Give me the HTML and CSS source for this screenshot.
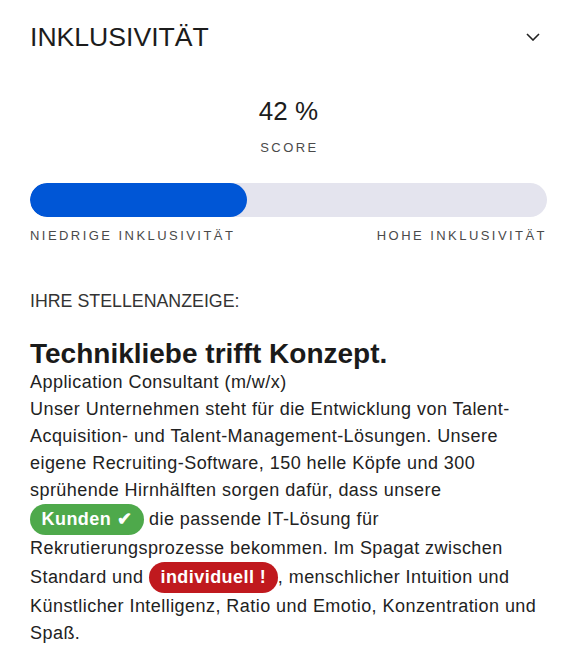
FILE: index.html
```html
<!DOCTYPE html>
<html lang="de">
<head>
<meta charset="utf-8">
<link rel="stylesheet" href="styles.css">
</head>
<body>
<section class="panel">
  <header class="head">
    <h1 class="title">INKLUSIVITÄT</h1>
    <svg class="chev" width="14" height="8" viewBox="0 0 14 8"><polyline points="1,1 7,7 13,1" fill="none" stroke="#222" stroke-width="1.6"/></svg>
  </header>
  <div class="score">
    <div class="value">42 %</div>
    <div class="caption">SCORE</div>
  </div>
  <div class="bar"><div class="fill" style="width:42%"></div></div>
  <div class="labels">
    <span class="caption">NIEDRIGE INKLUSIVITÄT</span>
    <span class="caption">HOHE INKLUSIVITÄT</span>
  </div>
  <h2 class="sub">IHRE STELLENANZEIGE:</h2>
  <article class="ad">
    <h3 class="ad-title">Technikliebe trifft Konzept.</h3>
    <div class="text">Application Consultant (m/w/x)</div>
    <p class="text">Unser Unternehmen steht für die Entwicklung von Talent-Acquisition- und Talent-Management-Lösungen. Unsere eigene Recruiting-Software, 150 helle Köpfe und 300 sprühende Hirnhälften sorgen dafür, dass unsere <span class="pill good">Kunden ✔</span> die passende IT-Lösung für Rekrutierungsprozesse bekommen. Im Spagat zwischen Standard und <span class="pill bad">individuell !</span>, menschlicher Intuition und Künstlicher Intelligenz, Ratio und Emotio, Konzentration und Spaß.</p>
  </article>
</section>
</body>
</html>
```
FILE: styles.css
```css
html, body {
  margin: 0;
  padding: 0;
  background: #ffffff;
}
body {
  font-family: "Liberation Sans", Arial, sans-serif;
  color: #1c1c1c;
}
.panel {
  padding: 17px 29px 0 30px;
}
.head {
  display: flex;
  justify-content: space-between;
  align-items: center;
  height: 40px;
}
.title {
  margin: 0;
  font-size: 26.6px;
  font-weight: 400;
  line-height: 40px;
  color: #1c1c1c;
}
.chev {
  display: block;
  margin-right: 7px;
}
.score {
  display: flex;
  flex-direction: column;
  align-items: center;
  margin-top: 39px;
}
.value {
  font-size: 26px;
  line-height: 30px;
  color: #1c1c1c;
}
.caption {
  font-size: 13px;
  line-height: 16px;
  letter-spacing: 2.45px;
  color: #4a4a4a;
}
.score .caption {
  margin-top: 14px;
  margin-left: 2px;
}
.bar {
  margin-top: 27px;
  height: 34px;
  border-radius: 17px;
  background: #e4e4ee;
  overflow: hidden;
}
.fill {
  height: 100%;
  border-radius: 17px;
  background: #0056d6;
}
.labels {
  display: flex;
  justify-content: space-between;
  margin-top: 11px;
}
.sub {
  margin: 46px 0 0;
  font-size: 17.8px;
  font-weight: 400;
  line-height: 22px;
  color: #333333;
}
.ad {
  margin-top: 27px;
}
.ad-title {
  margin: 0;
  font-size: 28px;
  font-weight: 700;
  line-height: 30px;
  color: #1a1a1a;
}
.text {
  margin: 0;
  font-size: 18px;
  line-height: 27px;
  letter-spacing: 0.45px;
  color: #222222;
}
.pill {
  display: inline-block;
  padding: 4px 11.5px;
  line-height: 23px;
  border-radius: 16px;
  color: #ffffff;
  font-weight: 700;
}
.good {
  background: #4ea94b;
}
.bad {
  background: #c0191e;
}
```
